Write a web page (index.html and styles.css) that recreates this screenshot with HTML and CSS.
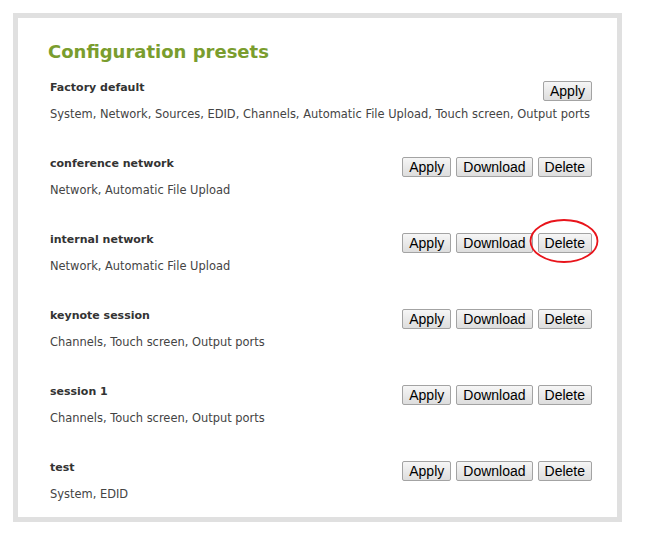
FILE: index.html
```html
<!DOCTYPE html>
<html>
<head>
    <meta charset="utf-8">
    <title>Configuration presets</title>
    <link rel="stylesheet" href="styles.css">
</head>
<body>
    <div class="panel">
        <h2 class="title">Configuration presets</h2>

        <div class="preset">
            <div class="presetHead">
                <span class="presetName">Factory default</span>
                <div class="actions">
                    <button class="btn">Apply</button>
                </div>
            </div>
            <div class="presetDesc">System, Network, Sources, EDID, Channels, Automatic File Upload, Touch screen, Output ports</div>
        </div>

        <div class="preset">
            <div class="presetHead">
                <span class="presetName">conference network</span>
                <div class="actions">
                    <button class="btn">Apply</button>
                    <button class="btn">Download</button>
                    <button class="btn">Delete</button>
                </div>
            </div>
            <div class="presetDesc">Network, Automatic File Upload</div>
        </div>

        <div class="preset">
            <div class="presetHead">
                <span class="presetName">internal network</span>
                <div class="actions">
                    <button class="btn">Apply</button>
                    <button class="btn">Download</button>
                    <span class="marked">
                        <button class="btn">Delete</button>
                        <svg class="circle" width="70" height="46" viewBox="0 0 70 46">
                            <ellipse cx="35" cy="23" rx="33.5" ry="21" fill="none" stroke="#e8141b" stroke-width="1.8"/>
                        </svg>
                    </span>
                </div>
            </div>
            <div class="presetDesc">Network, Automatic File Upload</div>
        </div>

        <div class="preset">
            <div class="presetHead">
                <span class="presetName">keynote session</span>
                <div class="actions">
                    <button class="btn">Apply</button>
                    <button class="btn">Download</button>
                    <button class="btn">Delete</button>
                </div>
            </div>
            <div class="presetDesc">Channels, Touch screen, Output ports</div>
        </div>

        <div class="preset">
            <div class="presetHead">
                <span class="presetName">session 1</span>
                <div class="actions">
                    <button class="btn">Apply</button>
                    <button class="btn">Download</button>
                    <button class="btn">Delete</button>
                </div>
            </div>
            <div class="presetDesc">Channels, Touch screen, Output ports</div>
        </div>

        <div class="preset">
            <div class="presetHead">
                <span class="presetName">test</span>
                <div class="actions">
                    <button class="btn">Apply</button>
                    <button class="btn">Download</button>
                    <button class="btn">Delete</button>
                </div>
            </div>
            <div class="presetDesc">System, EDID</div>
        </div>
    </div>
</body>
</html>
```

FILE: styles.css
```css
html, body {
    background: #ffffff;
    margin: 0;
    padding: 0;
}

body {
    padding: 13px;
    font-family: "DejaVu Sans", Verdana, sans-serif;
}

.panel {
    width: 609px;
    height: 509px;
    border: 5px solid #e0e0e0;
    padding: 22px 25px 0 32px;
    box-sizing: border-box;
}

.title {
    margin: 0 0 18px -2px;
    font-size: 18px;
    line-height: 23px;
    font-weight: bold;
    color: #7a9d2e;
}

.preset {
    margin-bottom: 36px;
}

.presetHead {
    display: flex;
    justify-content: space-between;
    align-items: flex-start;
    height: 20px;
}

.presetName {
    font-size: 11px;
    line-height: 14px;
    font-weight: bold;
    color: #333333;
}

.presetDesc {
    margin-top: 6px;
    font-size: 11.45px;
    line-height: 14px;
    color: #444444;
    white-space: nowrap;
}

.actions {
    display: flex;
    gap: 5px;
}

.btn {
    height: 20px;
    padding: 0 6px;
    font-family: "Liberation Sans", Arial, sans-serif;
    font-size: 14px;
    line-height: 18px;
    color: #000000;
    background: linear-gradient(#f6f6f6, #dddddd);
    border: 1px solid #a3a3a3;
    border-radius: 2px;
}

.marked {
    position: relative;
    display: flex;
}

.circle {
    position: absolute;
    left: -9px;
    top: -15px;
}
```
